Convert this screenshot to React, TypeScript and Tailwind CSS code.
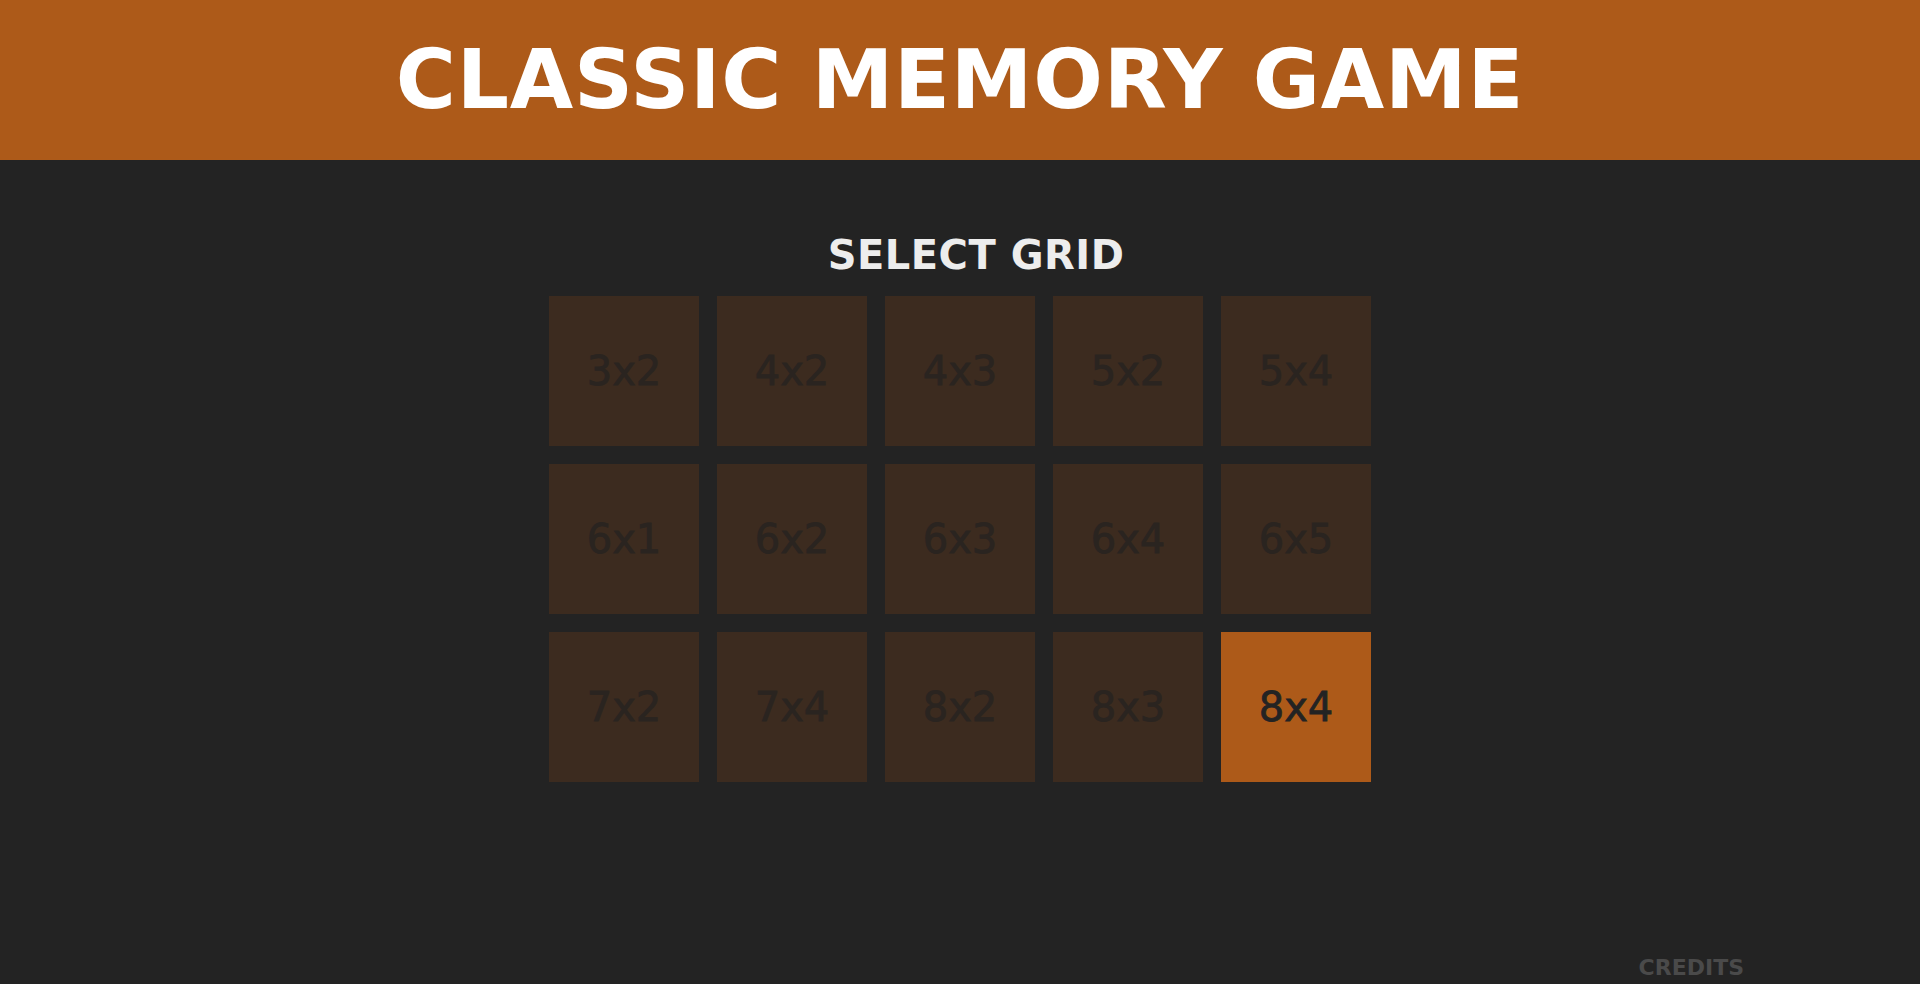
// Memory game - grid size picker
const GRIDS = [
  '3x2', '4x2', '4x3', '5x2', '5x4',
  '6x1', '6x2', '6x3', '6x4', '6x5',
  '7x2', '7x4', '8x2', '8x3', '8x4',
];

export default function App() {
  const selected = '8x4';

  return (
    <div className="min-h-screen bg-[#232323] flex flex-col font-['DejaVu_Sans',sans-serif]">
      <header className="h-[160px] bg-[#ad5a19] flex items-center justify-center">
        <h1 className="text-[82px] leading-none font-bold text-white tracking-[0.8px]">
          CLASSIC MEMORY GAME
        </h1>
      </header>

      <main className="flex flex-col items-center pt-[75px]">
        <h2 className="text-[40px] leading-none font-bold text-[#ededed] tracking-[0.5px] pl-[32px] mb-[21px]">
          SELECT GRID
        </h2>
        <div className="grid grid-cols-5 gap-[18px]">
          {GRIDS.map((g) => (
            <button
              key={g}
              className={`w-[150px] h-[150px] flex items-center justify-center text-[40px] leading-none [-webkit-text-stroke:0.8px_currentColor] ${
                g === selected
                  ? 'bg-[#ad5a19] text-[#232323]'
                  : 'bg-[#3c2b1f] text-[#2a2420]'
              }`}
            >
              {g}
            </button>
          ))}
        </div>
      </main>

      <footer className="mt-auto flex justify-end pr-[176px] pb-[5px]">
        <span className="text-[22px] leading-none font-bold text-[#4a4a4a]">CREDITS</span>
      </footer>
    </div>
  );
}
